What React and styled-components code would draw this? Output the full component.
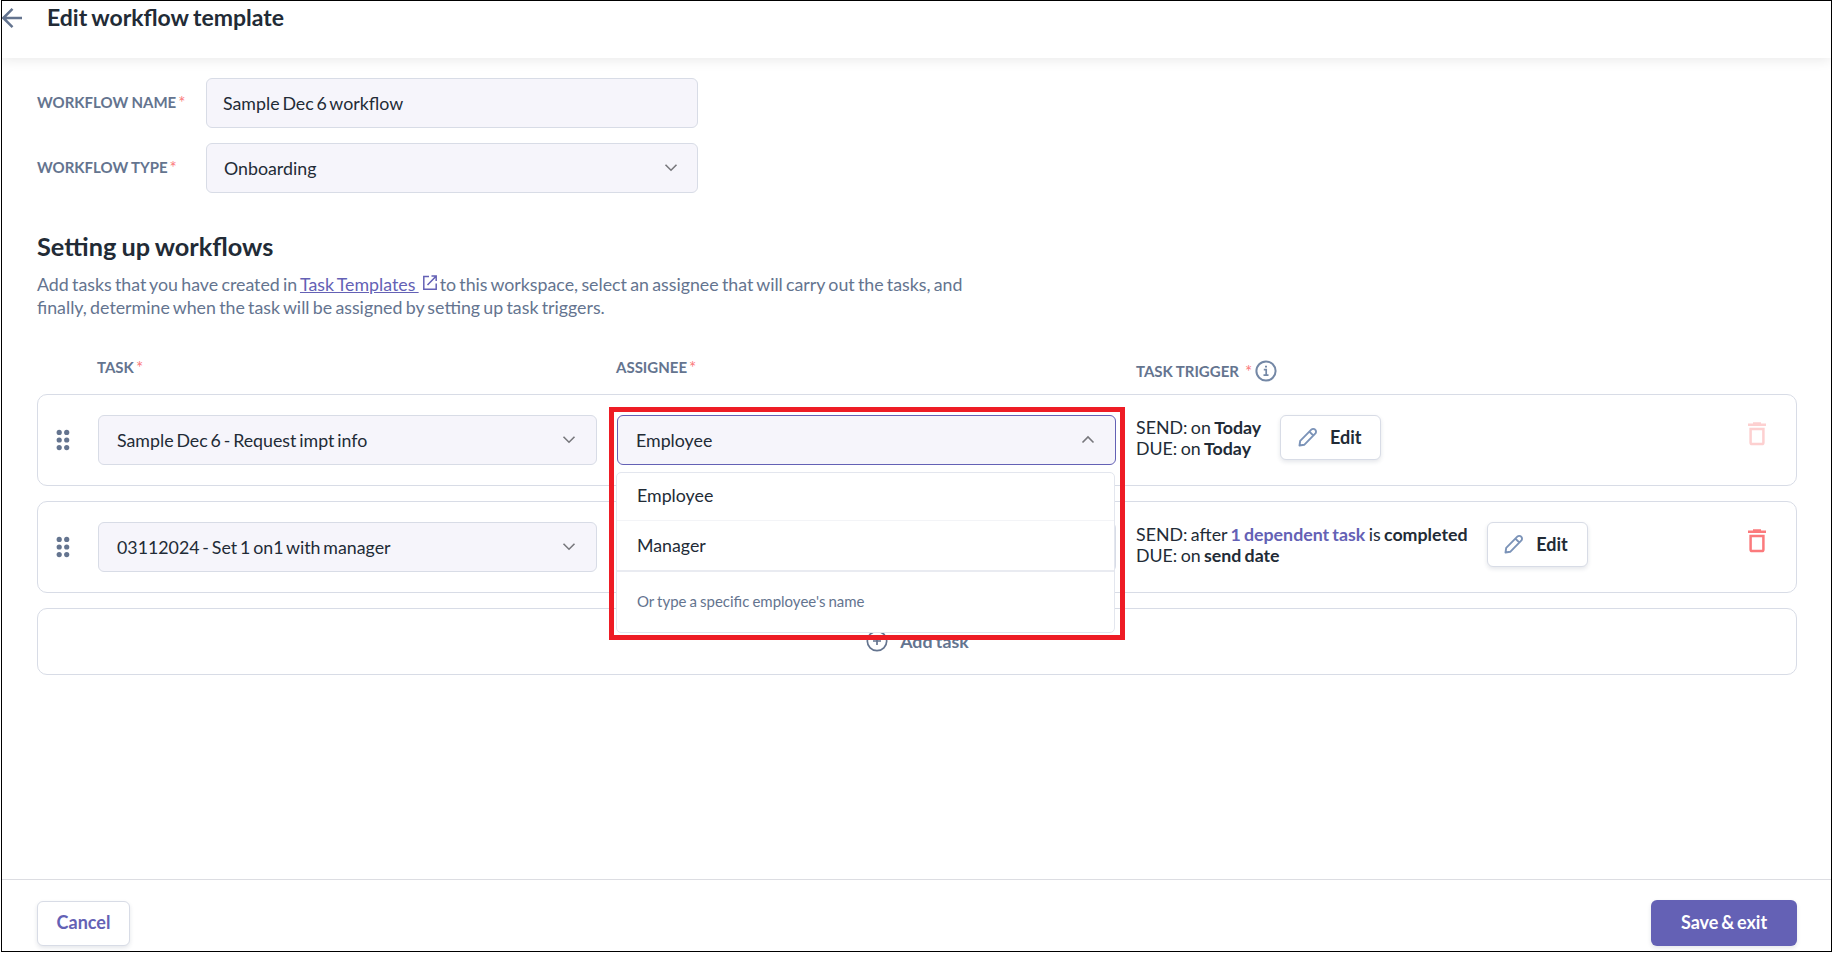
import React from "react";
import styled, { createGlobalStyle } from "styled-components";

const GlobalStyle = createGlobalStyle`
    * {
        box-sizing: border-box;
    }

    body {
        margin: 0;
        background: #fff;
        color: #222b36;
        font-family: Lato, "Liberation Sans", sans-serif;
        font-size: 17.8px;
    }

    button {
        font-family: inherit;
    }
`;

const Page = styled.div`
    display: flex;
    flex-direction: column;
    width: 1831px;
    height: 952px;
    margin-left: 1px;
    border: 1px solid #000;
    overflow: hidden;
`;

const TopBar = styled.header`
    display: flex;
    align-items: flex-start;
    flex: none;
    height: 57px;
    box-shadow: 0 2px 12px rgba(0, 0, 0, 0.09);

    svg {
        margin-top: 6px;
    }
`;

const PageTitle = styled.h1`
    margin: 0 0 0 24px;
    font-size: 23px;
    line-height: 32px;
    font-weight: 700;
    word-spacing: -1.2px;
`;

const Content = styled.main`
    flex: 1;
    padding: 20px 34px 0 35px;
`;

const FieldRow = styled.div`
    display: flex;
    align-items: center;
    margin-bottom: 15px;
`;

const Label = styled.div`
    color: #64748f;
    font-size: 15px;
    line-height: 18px;
    font-weight: 700;
    white-space: nowrap;
    word-spacing: -0.3px;
`;

const FieldLabel = styled(Label)`
    width: 169px;
    padding-bottom: 2px;
`;

const ColumnLabel = styled(Label)`
    padding-top: 1px;
`;

const Star = styled.span`
    position: relative;
    top: 1px;
    margin-left: ${(props) => props.$gap || 2}px;
    color: #fb7a7c;
    font-size: 17px;
    line-height: 0;
    font-weight: 400;
`;

const Field = styled.div`
    display: flex;
    align-items: center;
    justify-content: space-between;
    width: ${(props) => props.$width}px;
    height: 50px;
    padding: 0 ${(props) => props.$end || 20}px 0 ${(props) => props.$indent || 18}px;
    border: 1px solid ${(props) => (props.$open ? "#6461b5" : "#d8dce6")};
    border-radius: 6px;
    background: #f6f5fb;
    line-height: 22px;
    word-spacing: -1.7px;
`;

const SectionTitle = styled.h2`
    margin: 37px 0 0;
    font-size: 25.3px;
    line-height: 32px;
    font-weight: 700;
    word-spacing: -1px;
`;

const Intro = styled.p`
    margin: 11px 0 0;
    color: #64748f;
    line-height: 23px;
    white-space: nowrap;
    word-spacing: -1.3px;
`;

const TemplatesLink = styled.a`
    color: #6461b5;
    text-decoration: underline;
    white-space: pre;
`;

const LinkIcon = styled.svg`
    margin: 0 3px 0 4px;
    vertical-align: 1px;
`;

const TableHead = styled.div`
    display: grid;
    grid-template-columns: 60px 519px 520px 1fr;
    height: 37px;
    margin-top: 38px;
`;

const TriggerHead = styled.div`
    display: flex;
    align-items: center;
    height: 22px;
    margin-top: 3px;

    svg {
        margin-left: 3px;
    }
`;

const Card = styled.div`
    display: grid;
    grid-template-columns: 60px 519px 519px 1fr;
    align-items: start;
    height: 92px;
    margin-bottom: 15px;
    padding: 20px 0 0;
    border: 1px solid #d8dce6;
    border-radius: 10px;
`;

const Handle = styled.div`
    display: flex;
    align-items: center;
    height: 50px;
    padding-left: 18px;
`;

const SelectWrap = styled.div`
    position: relative;
`;

const Highlight = styled.div`
    position: absolute;
    top: -8px;
    left: -8px;
    z-index: 3;
    width: 516px;
    height: 233px;
    border: 5px solid #ee1c25;
`;

const Menu = styled.div`
    position: absolute;
    top: 57px;
    left: -1px;
    z-index: 2;
    width: 499px;
    height: 161px;
    border: 1px solid #e3e6ee;
    border-radius: 5px;
    background: #fff;
`;

const Option = styled.div`
    height: ${(props) => (props.$last ? 51 : 48)}px;
    padding: ${(props) => (props.$last ? 13 : 11)}px 20px 0;
    border-bottom: ${(props) => (props.$last ? "2px solid #e9ebf1" : "1px solid #f3f4f7")};
    line-height: 22px;
`;

const Hint = styled.div`
    padding: 20px 20px 0;
    color: #64748f;
    font-size: 15px;
    line-height: 18px;
    word-spacing: -0.8px;
`;

const Trigger = styled.div`
    display: flex;
    align-items: flex-start;
`;

const TriggerText = styled.div`
    margin-right: 19px;
    padding-top: 2px;
    line-height: 21px;
    white-space: nowrap;
    word-spacing: -1.2px;
`;

const Dependent = styled.b`
    color: #6461b5;
`;

const Button = styled.button`
    display: flex;
    align-items: center;
    justify-content: center;
    width: ${(props) => props.$width}px;
    height: ${(props) => (props.$primary ? 46 : 45)}px;
    padding: 0 0 2px;
    border: ${(props) => (props.$primary ? "0" : "1px solid #d8dce6")};
    border-radius: 6px;
    background: ${(props) => (props.$primary ? "#6461b5" : "#fff")};
    color: ${(props) => props.$color || "#222b36"};
    font-size: 18px;
    font-weight: 700;
    word-spacing: -1.6px;
    box-shadow: 0 2px 4px rgba(50, 60, 90, 0.13);
`;

const TriggerButton = styled(Button)`
    gap: 12px;
    padding-right: 2px;
`;

const CancelButton = styled(Button)`
    padding-bottom: 4px;
`;

const Trash = styled.svg`
    margin: 7px 30px 0 auto;
    opacity: ${(props) => (props.$disabled ? 0.35 : 1)};
`;

const AddCard = styled.div`
    display: flex;
    align-items: center;
    justify-content: center;
    gap: 12px;
    height: 67px;
    padding: 0 0 2px 1px;
    border: 1px solid #d8dce6;
    border-radius: 10px;
    color: #64748f;
    font-weight: 700;
    word-spacing: -1px;
`;

const Footer = styled.footer`
    display: flex;
    align-items: flex-end;
    justify-content: space-between;
    flex: none;
    height: 72px;
    padding: 0 34px 5px 35px;
    border-top: 1px solid #dcdde2;
`;

function Chevron({ up }) {
    return (
        <svg width="14" height="10" viewBox="0 0 14 10" fill="none" stroke="#77777c" strokeWidth="1.6">
            <path d={up ? "M1.5 7.5 7 2 12.5 7.5" : "M1.5 1.7 7 7.2 12.5 1.7"} />
        </svg>
    );
}

function BackArrow() {
    return (
        <svg width="21" height="22" viewBox="0 0 21 22" fill="none" stroke="#64748f" strokeWidth="2.5">
            <path d="M20 11H1.5M10.5 1.8 1.3 11l9.2 9.2" />
        </svg>
    );
}

function DragDots() {
    return (
        <svg width="14" height="22" viewBox="0 0 14 22" fill="#64748f">
            {[3.4, 11, 18.6].map((y) => (
                <React.Fragment key={y}>
                    <circle cx="3.2" cy={y} r="2.6" />
                    <circle cx="10.7" cy={y} r="2.6" />
                </React.Fragment>
            ))}
        </svg>
    );
}

function Pencil() {
    return (
        <svg width="20" height="20" viewBox="0 0 20 20" fill="none" stroke="#7b93b8" strokeWidth="1.9" strokeLinejoin="round">
            <path d="M1.5 18.5 2.2 13.8 13.3 2.7a2.7 2.7 0 0 1 3.9 0 2.7 2.7 0 0 1 0 3.9L6.2 17.8zM11.4 4.6l3.9 3.9" />
        </svg>
    );
}

function TrashIcon({ disabled }) {
    return (
        <Trash $disabled={disabled} width="18" height="24" viewBox="0 0 18 24" fill="none" stroke="#fb7a7c" strokeWidth="2.5">
            <path d="M0 2.8h18M5 1.5h8M2.6 7h12.8v13.4q0 1.6-1.6 1.6H4.2q-1.6 0-1.6-1.6z" />
        </Trash>
    );
}

function Select({ value, width = 499, indent, end, open }) {
    return (
        <Field $width={width} $indent={indent} $end={end} $open={open}>
            <span>{value}</span>
            <Chevron up={open} />
        </Field>
    );
}

function EditButton() {
    return (
        <TriggerButton $width={101}>
            <Pencil />
            Edit
        </TriggerButton>
    );
}

export default function App() {
    return (
        <>
            <GlobalStyle />
            <Page>
                <TopBar>
                    <BackArrow />
                    <PageTitle>Edit workflow template</PageTitle>
                </TopBar>

                <Content>
                    <FieldRow>
                        <FieldLabel>
                            WORKFLOW NAME<Star>*</Star>
                        </FieldLabel>
                        <Field $width={492} $indent={16}>
                            Sample Dec 6 workflow
                        </Field>
                    </FieldRow>
                    <FieldRow>
                        <FieldLabel>
                            WORKFLOW TYPE<Star>*</Star>
                        </FieldLabel>
                        <Select width={492} indent={17} end={19} value="Onboarding" />
                    </FieldRow>

                    <SectionTitle>Setting up workflows</SectionTitle>
                    <Intro>
                        Add tasks that you have created in <TemplatesLink>Task Templates </TemplatesLink>
                        <LinkIcon width="14" height="15" viewBox="0 0 14 15" fill="none" stroke="#6461b5" strokeWidth="1.5">
                            <path d="M6 1.5H.8v12.7h12.4V8.5M8.5 1h4.7v5M13 1.2 4.5 10" />
                        </LinkIcon>
                        to this workspace, select an assignee that will carry out the tasks, and
                        <br />
                        finally, determine when the task will be assigned by setting up task triggers.
                    </Intro>

                    <TableHead>
                        <span />
                        <ColumnLabel>
                            TASK<Star>*</Star>
                        </ColumnLabel>
                        <ColumnLabel>
                            ASSIGNEE<Star>*</Star>
                        </ColumnLabel>
                        <TriggerHead>
                            <Label>
                                TASK TRIGGER<Star $gap={6}>*</Star>
                            </Label>
                            <svg width="22" height="22" viewBox="0 0 22 22" fill="none" stroke="#7488a6" strokeWidth="2">
                                <circle cx="11" cy="11" r="9.6" />
                                <path d="M8.8 9.7h2.4v5.4M8.5 15.1h5M10 6.6h2" strokeWidth="1.7" />
                            </svg>
                        </TriggerHead>
                    </TableHead>

                    <Card>
                        <Handle>
                            <DragDots />
                        </Handle>
                        <Select value="Sample Dec 6 - Request impt info" />
                        <SelectWrap>
                            <Select value="Employee" open />
                            <Menu>
                                <Option>Employee</Option>
                                <Option $last>Manager</Option>
                                <Hint>Or type a specific employee's name</Hint>
                            </Menu>
                            <Highlight />
                        </SelectWrap>
                        <Trigger>
                            <TriggerText>
                                SEND: on <b>Today</b>
                                <br />
                                DUE: on <b>Today</b>
                            </TriggerText>
                            <EditButton />
                            <TrashIcon disabled />
                        </Trigger>
                    </Card>

                    <Card>
                        <Handle>
                            <DragDots />
                        </Handle>
                        <Select value="03112024 - Set 1 on1 with manager" />
                        <Select value="" />
                        <Trigger>
                            <TriggerText>
                                SEND: after <Dependent>1 dependent task</Dependent> is <b>completed</b>
                                <br />
                                DUE: on <b>send date</b>
                            </TriggerText>
                            <EditButton />
                            <TrashIcon />
                        </Trigger>
                    </Card>

                    <AddCard>
                        <svg width="22" height="22" viewBox="0 0 22 22" fill="none" stroke="#64748f" strokeWidth="1.7">
                            <circle cx="11" cy="11" r="9.7" />
                            <path d="M11 7v8M7 11h8" />
                        </svg>
                        Add task
                    </AddCard>
                </Content>

                <Footer>
                    <CancelButton $width={93} $color="#6461b5">
                        Cancel
                    </CancelButton>
                    <Button $width={146} $color="#fff" $primary>
                        Save &amp; exit
                    </Button>
                </Footer>
            </Page>
        </>
    );
}
